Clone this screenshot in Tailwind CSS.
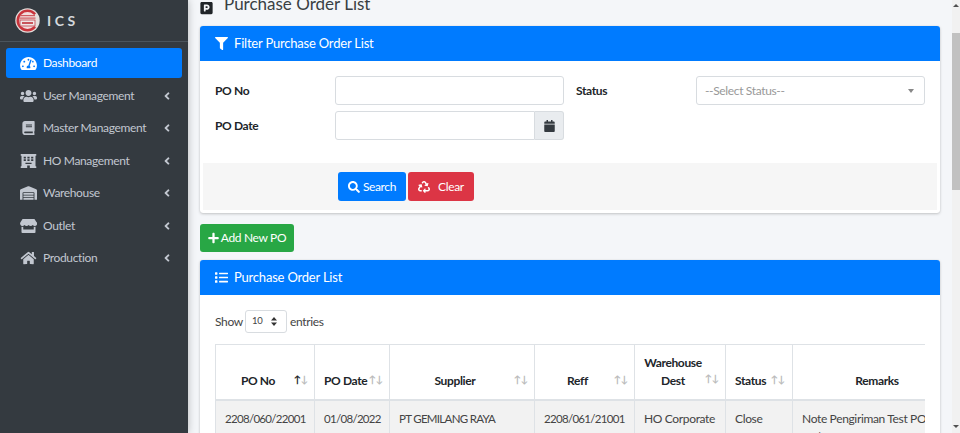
<!doctype html>
<html lang="en">
<head>
    <meta charset="UTF-8" />
    <meta name="viewport" content="width=device-width, initial-scale=1.0" />
    <script src="https://cdn.jsdelivr.net/npm/@tailwindcss/browser@4"></script>
    <title>Purchase Order List</title>
</head>
<body class="h-[433px] overflow-hidden bg-[#f4f6f9] font-['Lato',sans-serif] text-[12px] tracking-[-0.35px] text-[#212529]">
<div class="flex h-[433px]">

    <!-- Sidebar -->
    <aside class="w-[188px] shrink-0 bg-[#343a40] text-[#c2c7d0] shadow-[0_0_8px_rgba(0,0,0,0.25)]">
        <div class="flex h-[42px] items-center gap-[7px] border-b border-[#4b545c] pl-[15px]">
            <svg class="h-[25px] w-[25px]" viewBox="0 0 25 25">
                <circle cx="12.5" cy="12.5" r="12.2" fill="#e4dedc"/>
                <path d="M12.5 1.5A11 11 0 0 0 12.5 23.500A11 11 0 0 0 21 19.500L12.5 12.500L21 5.500A11 11 0 0 0 12.500 1.500Z" fill="#c9343c"/>
                <circle cx="12.5" cy="12.5" r="8.5" fill="#f2dcdc"/>
                <rect x="5" y="7" width="15" height="1.200" fill="#cf5a60"/>
                <rect x="4.500" y="9.500" width="16" height="1.200" fill="#cf5a60"/>
                <rect x="5" y="12" width="15" height="6" fill="#efe6e6" stroke="#c04049" stroke-width="0.800"/>
                <rect x="7" y="14" width="11" height="2" fill="#c9545b"/>
            </svg>
            <span class="text-[14px] font-bold tracking-[3.5px] text-[#d5d8dc]">ICS</span>
        </div>
        <nav class="px-[6px] pt-[6px]">
            <a class="flex h-[30px] items-center rounded-[3px] bg-[#007bff] pl-[14px] text-white">
                <svg class="mr-[6px] h-[15px] w-[17px] fill-current" viewBox="0 0 576 512"><path d="M288 32C128.94 32 0 160.94 0 320c0 52.8 14.25 102.26 39.06 144.8 5.61 9.62 16.3 15.2 27.44 15.2h443c11.14 0 21.83-5.58 27.44-15.2C561.75 422.26 576 372.8 576 320c0-159.06-128.94-288-288-288zm0 64c14.71 0 26.58 10.13 30.32 23.65-1.11 2.26-2.64 4.23-3.45 6.67l-9.22 27.67c-5.13 3.49-10.97 6.01-17.64 6.01-17.67 0-32-14.33-32-32S270.33 96 288 96zM96 384c-17.67 0-32-14.33-32-32s14.33-32 32-32 32 14.33 32 32-14.33 32-32 32zm48-160c-17.67 0-32-14.33-32-32s14.33-32 32-32 32 14.33 32 32-14.33 32-32 32zm246.77-72.41l-61.33 184C343.13 347.33 352 364.54 352 384c0 11.72-3.38 22.55-8.88 32H232.88c-5.5-9.45-8.88-20.28-8.88-32 0-33.94 26.5-61.43 59.9-63.59l61.34-184.01c4.17-12.56 17.73-19.45 30.36-15.17 12.57 4.19 19.35 17.77 15.17 30.36zm14.66 57.2l15.52-46.55c3.47-1.29 7.13-2.23 11.05-2.23 17.67 0 32 14.33 32 32s-14.33 32-32 32c-11.38-.01-20.89-6.28-26.57-15.22zM480 384c-17.67 0-32-14.33-32-32s14.33-32 32-32 32 14.33 32 32-14.33 32-32 32z"/></svg>
                Dashboard
            </a>
            <a class="mt-[2.5px] flex h-[30px] items-center pl-[14px]">
                <svg class="mr-[6px] h-[14px] w-[17px] fill-current" viewBox="0 0 640 512"><path d="M96 224c35.3 0 64-28.7 64-64s-28.7-64-64-64-64 28.7-64 64 28.7 64 64 64zm448 0c35.3 0 64-28.7 64-64s-28.7-64-64-64-64 28.7-64 64 28.7 64 64 64zm32 32h-64c-17.6 0-33.5 7.1-45.1 18.6 40.3 22.1 68.9 62 75.1 109.4h66c17.7 0 32-14.3 32-32v-32c0-35.3-28.7-64-64-64zm-256 0c61.9 0 112-50.1 112-112S381.9 32 320 32 208 82.1 208 144s50.1 112 112 112zm76.8 32h-8.3c-20.8 10-43.9 16-68.5 16s-47.6-6-68.5-16h-8.3C179.6 288 128 339.6 128 403.2V432c0 26.5 21.5 48 48 48h288c26.5 0 48-21.5 48-48v-28.8c0-63.6-51.6-115.2-115.2-115.2zm-223.7-13.4C161.5 263.1 145.6 256 128 256H64c-35.3 0-64 28.7-64 64v32c0 17.7 14.3 32 32 32h65.9c6.3-47.4 34.9-87.3 75.2-109.4z"/></svg>
                <span class="flex-1">User Management</span>
                <svg class="mr-[12px] h-[12px] w-[6px] fill-current" viewBox="0 0 256 512"><path d="M31.7 239l136-136c9.4-9.4 24.6-9.4 33.9 0l22.6 22.6c9.4 9.4 9.4 24.6 0 33.9L127.9 256l96.4 96.4c9.4 9.4 9.4 24.6 0 33.9L201.7 409c-9.4 9.4-24.6 9.4-33.9 0l-136-136c-9.5-9.4-9.5-24.6-.1-34z"/></svg>
            </a>
            <a class="mt-[2.5px] flex h-[30px] items-center pl-[14px]">
                <svg class="mr-[6px] h-[14px] w-[17px] fill-current" viewBox="0 0 448 512"><path d="M448 360V24c0-13.3-10.7-24-24-24H96C43 0 0 43 0 96v320c0 53 43 96 96 96h328c13.3 0 24-10.7 24-24v-16c0-7.5-3.5-14.3-8.9-18.7-4.2-15.4-4.2-59.3 0-74.7 5.4-4.3 8.9-11.1 8.9-18.6zM128 134c0-3.3 2.7-6 6-6h212c3.3 0 6 2.7 6 6v20c0 3.3-2.7 6-6 6H134c-3.3 0-6-2.7-6-6v-20zm0 64c0-3.3 2.7-6 6-6h212c3.3 0 6 2.7 6 6v20c0 3.3-2.7 6-6 6H134c-3.3 0-6-2.7-6-6v-20zm253.4 250H96c-17.7 0-32-14.3-32-32 0-17.6 14.4-32 32-32h285.4c-1.9 17.1-1.9 46.9 0 64z"/></svg>
                <span class="flex-1">Master Management</span>
                <svg class="mr-[12px] h-[12px] w-[6px] fill-current" viewBox="0 0 256 512"><path d="M31.7 239l136-136c9.4-9.4 24.6-9.4 33.9 0l22.6 22.6c9.4 9.4 9.4 24.6 0 33.9L127.9 256l96.4 96.4c9.4 9.4 9.4 24.6 0 33.9L201.7 409c-9.4 9.4-24.6 9.4-33.9 0l-136-136c-9.5-9.4-9.5-24.6-.1-34z"/></svg>
            </a>
            <a class="mt-[2.5px] flex h-[30px] items-center pl-[14px]">
                <svg class="mr-[6px] h-[14px] w-[17px] fill-current" viewBox="0 0 576 512"><path fill-rule="evenodd" d="M16 0H560a16 16 0 0 1 16 16V48a16 16 0 0 1-16 16H544V448h16a16 16 0 0 1 16 16v32a16 16 0 0 1-16 16H336V416H240V512H16a16 16 0 0 1-16-16V464a16 16 0 0 1 16-16H32V64H16A16 16 0 0 1 0 48V16A16 16 0 0 1 16 0ZM112 96V160H192V96ZM248 96V160H328V96ZM384 96V160H464V96ZM112 192V256H192V192ZM248 192V256H328V192ZM384 192V256H464V192ZM176 320V368H400V320Z"/></svg>
                <span class="flex-1">HO Management</span>
                <svg class="mr-[12px] h-[12px] w-[6px] fill-current" viewBox="0 0 256 512"><path d="M31.7 239l136-136c9.4-9.4 24.6-9.4 33.9 0l22.6 22.6c9.4 9.4 9.4 24.6 0 33.9L127.9 256l96.4 96.4c9.4 9.4 9.4 24.6 0 33.9L201.7 409c-9.4 9.4-24.6 9.4-33.9 0l-136-136c-9.5-9.4-9.5-24.6-.1-34z"/></svg>
            </a>
            <a class="mt-[2.5px] flex h-[30px] items-center pl-[14px]">
                <svg class="mr-[6px] h-[14px] w-[17px] fill-current" viewBox="0 0 640 512"><path d="M504 352H136.4c-4.4 0-8 3.6-8 8l-.1 48c0 4.4 3.6 8 8 8H504c4.4 0 8-3.6 8-8v-48c0-4.4-3.6-8-8-8zm0 96H136.1c-4.4 0-8 3.6-8 8l-.1 48c0 4.4 3.6 8 8 8h368c4.4 0 8-3.6 8-8v-48c0-4.4-3.6-8-8-8zm0-192H136.6c-4.4 0-8 3.6-8 8l-.1 48c0 4.4 3.6 8 8 8H504c4.4 0 8-3.6 8-8v-48c0-4.4-3.6-8-8-8zm106.5-139L338.4 3.7a48.15 48.15 0 0 0-36.9 0L29.5 117C11.7 124.5 0 141.9 0 161.3V504c0 4.4 3.6 8 8 8h80c4.4 0 8-3.6 8-8V256c0-17.6 14.6-32 32.6-32h382.8c18 0 32.6 14.4 32.6 32v248c0 4.4 3.6 8 8 8h80c4.4 0 8-3.6 8-8V161.3c0-19.4-11.7-36.8-29.5-44.3z"/></svg>
                <span class="flex-1">Warehouse</span>
                <svg class="mr-[12px] h-[12px] w-[6px] fill-current" viewBox="0 0 256 512"><path d="M31.7 239l136-136c9.4-9.4 24.6-9.4 33.9 0l22.6 22.6c9.4 9.4 9.4 24.6 0 33.9L127.9 256l96.4 96.4c9.4 9.4 9.4 24.6 0 33.9L201.7 409c-9.4 9.4-24.6 9.4-33.9 0l-136-136c-9.5-9.4-9.5-24.6-.1-34z"/></svg>
            </a>
            <a class="mt-[2.5px] flex h-[30px] items-center pl-[14px]">
                <svg class="mr-[6px] h-[14px] w-[17px] fill-current" viewBox="0 0 616 512"><path d="M602 118.6L537.1 15C531.3 5.7 521 0 510 0H106C95 0 84.7 5.7 78.9 15L14 118.6c-33.9 54.1-3.9 129.3 59.4 137.9 4.6.6 9.2 1 13.7 1 30.1 0 56.7-13.2 75.1-33.6 18.4 20.4 45.1 33.6 75.1 33.6 30.1 0 56.8-13.2 75.1-33.6 18.4 20.4 45.1 33.6 75.1 33.6 30.1 0 56.7-13.2 75.1-33.6 18.4 20.4 45 33.6 75.1 33.6 4.6 0 9.1-.4 13.7-1 63.5-8.6 93.6-83.9 59.6-137.9zM529.5 288c-10 0-19.9-1.5-29.5-3.8V384H116v-99.8c-9.6 2.2-19.5 3.8-29.5 3.8-6 0-12.1-.4-18-1.2-5.6-.8-11.1-2.1-16.4-3.6V480c0 17.7 14.3 32 32 32h448c17.7 0 32-14.3 32-32V283.2c-5.4 1.6-10.8 2.9-16.4 3.6-6.1.8-12.1 1.2-18.2 1.2z"/></svg>
                <span class="flex-1">Outlet</span>
                <svg class="mr-[12px] h-[12px] w-[6px] fill-current" viewBox="0 0 256 512"><path d="M31.7 239l136-136c9.4-9.4 24.6-9.4 33.9 0l22.6 22.6c9.4 9.4 9.4 24.6 0 33.9L127.9 256l96.4 96.4c9.4 9.4 9.4 24.6 0 33.9L201.7 409c-9.4 9.4-24.6 9.4-33.9 0l-136-136c-9.5-9.4-9.5-24.6-.1-34z"/></svg>
            </a>
            <a class="mt-[2.5px] flex h-[30px] items-center pl-[14px]">
                <svg class="mr-[6px] h-[14px] w-[17px] fill-current" viewBox="0 0 576 512"><path d="M280.37 148.26L96 300.11V464a16 16 0 0 0 16 16l112.06-.29a16 16 0 0 0 15.92-16V368a16 16 0 0 1 16-16h64a16 16 0 0 1 16 16v95.64a16 16 0 0 0 16 16.05L464 480a16 16 0 0 0 16-16V300L295.67 148.26a12.19 12.19 0 0 0-15.3 0zM571.6 251.47L488 182.56V44.05a12 12 0 0 0-12-12h-56a12 12 0 0 0-12 12v72.61L318.47 43a48 48 0 0 0-61 0L4.34 251.47a12 12 0 0 0-1.6 16.9l25.5 31A12 12 0 0 0 45.15 301l235.22-193.74a12.19 12.19 0 0 1 15.3 0L530.9 301a12 12 0 0 0 16.9-1.6l25.5-31a12 12 0 0 0-1.7-16.93z"/></svg>
                <span class="flex-1">Production</span>
                <svg class="mr-[12px] h-[12px] w-[6px] fill-current" viewBox="0 0 256 512"><path d="M31.7 239l136-136c9.4-9.4 24.6-9.4 33.9 0l22.6 22.6c9.4 9.4 9.4 24.6 0 33.9L127.9 256l96.4 96.4c9.4 9.4 9.4 24.6 0 33.9L201.7 409c-9.4 9.4-24.6 9.4-33.9 0l-136-136c-9.5-9.4-9.5-24.6-.1-34z"/></svg>
            </a>
        </nav>
    </aside>

    <!-- Content -->
    <main class="min-w-0 flex-1 overflow-hidden pr-[12px] pl-[12px]">
        <div class="-mt-[19px] flex h-[45px] items-center gap-[11px]">
            <svg class="mt-[8px] h-[14px] w-[13px] fill-[#212529]" viewBox="0 0 448 512"><path d="M400 32H48C21.5 32 0 53.5 0 80v352c0 26.5 21.5 48 48 48h352c26.5 0 48-21.5 48-48V80c0-26.5-21.5-48-48-48zM240 320h-48v48c0 8.8-7.2 16-16 16h-32c-8.8 0-16-7.2-16-16V144c0-8.8 7.2-16 16-16h96c52.9 0 96 43.1 96 96s-43.1 96-96 96zm0-128h-48v64h48c17.6 0 32-14.4 32-32s-14.4-32-32-32z"/></svg>
            <h1 class="text-[17px] font-normal tracking-normal text-[#3a3f44]">Purchase Order List</h1>
        </div>

        <!-- Filter card -->
        <section class="rounded-[3px] bg-white shadow-[0_0_1px_rgba(0,0,0,0.13),0_1px_3px_rgba(0,0,0,0.2)]">
            <div class="flex h-[35px] items-center gap-[6px] rounded-t-[3px] bg-[#007bff] pl-[15px] text-[13px] tracking-[-0.2px] text-white">
                <svg class="h-[13px] w-[13px] fill-current" viewBox="0 0 512 512"><path d="M487.976 0H24.028C2.71 0-8.047 25.866 7.058 40.971L192 225.941V432c0 7.831 3.821 15.17 10.237 19.662l80 55.98C298.02 518.69 320 507.493 320 487.98V225.941l184.947-184.97C520.021 25.896 509.338 0 487.976 0z"/></svg>
                Filter Purchase Order List
            </div>
            <div class="px-[15px] pt-[15px]">
                <div class="flex items-center">
                    <label class="w-[120px] font-bold">PO No</label>
                    <input class="h-[29px] w-[229px] rounded-[3px] border border-[#d8dce0] bg-white" />
                    <label class="ml-[12px] w-[120px] font-bold">Status</label>
                    <div class="flex h-[29px] w-[229px] items-center justify-between rounded-[3px] border border-[#d8dce0] pr-[10px] pl-[8px] text-[#999]">
                        --Select Status--
                        <span class="h-0 w-0 border-x-[3px] border-t-[4px] border-x-transparent border-t-[#888]"></span>
                    </div>
                </div>
                <div class="mt-[6px] flex items-center">
                    <label class="w-[120px] font-bold">PO Date</label>
                    <div class="flex h-[29px] w-[229px]">
                        <input class="h-full min-w-0 flex-1 rounded-l-[3px] border border-[#d8dce0] bg-white" />
                        <span class="flex w-[29px] items-center justify-center rounded-r-[3px] border border-l-0 border-[#d8dce0] bg-[#e9ecef]">
                            <svg class="h-[12px] w-[11px] fill-[#343a40]" viewBox="0 0 448 512"><path d="M12 192h424c6.6 0 12 5.4 12 12v260c0 26.5-21.5 48-48 48H48c-26.5 0-48-21.5-48-48V204c0-6.6 5.4-12 12-12zm436-44v-36c0-26.5-21.5-48-48-48h-48V12c0-6.6-5.4-12-12-12h-40c-6.6 0-12 5.4-12 12v52H160V12c0-6.6-5.4-12-12-12h-40c-6.6 0-12 5.4-12 12v52H48C21.5 64 0 85.5 0 112v36c0 6.6 5.4 12 12 12h424c6.6 0 12-5.4 12-12z"/></svg>
                        </span>
                    </div>
                </div>
            </div>
            <div class="mx-[3px] mt-[23px] flex h-[47px] items-center gap-[2px] bg-[#f6f6f6] pl-[135px]">
                <button class="flex h-[29px] w-[68px] items-center justify-center gap-[3px] rounded-[3px] bg-[#007bff] text-white">
                    <svg class="h-[12px] w-[12px] fill-current" viewBox="0 0 512 512"><path d="M505 442.7L405.3 343c-4.5-4.5-10.6-7-17-7H372c27.6-35.3 44-79.7 44-128C416 93.1 322.9 0 208 0S0 93.1 0 208s93.1 208 208 208c48.3 0 92.7-16.4 128-44v16.3c0 6.4 2.5 12.5 7 17l99.7 99.7c9.4 9.4 24.6 9.4 33.9 0l28.3-28.3c9.4-9.4 9.4-24.6.1-34zM208 336c-70.7 0-128-57.2-128-128 0-70.7 57.2-128 128-128 70.7 0 128 57.2 128 128 0 70.7-57.2 128-128 128z"/></svg>
                    Search
                </button>
                <button class="flex h-[29px] w-[66px] items-center justify-center gap-[8px] rounded-[3px] bg-[#dc3545] text-white">
                    <svg class="h-[12px] w-[12px] fill-current" viewBox="0 0 512 512"><path d="M184.561 261.903c3.232 13.997-12.123 24.635-24.068 17.168l-40.736-25.455-50.867 81.402C55.606 356.273 70.96 384 96.012 384H148c6.627 0 12 5.373 12 12v40c0 6.627-5.373 12-12 12H96.115c-75.334 0-121.302-83.048-81.408-146.88l50.822-81.388-40.725-25.448c-12.081-7.547-8.966-25.961 4.879-29.158l110.237-25.45c8.611-1.988 17.201 3.381 19.189 11.99l25.452 110.237zm98.561-182.915l41.289 66.076-40.74 25.457c-12.051 7.528-9 25.953 4.879 29.158l110.237 25.45c8.672 1.999 17.215-3.438 19.189-11.99l25.45-110.237c3.197-13.844-11.99-24.719-24.068-17.168l-40.687 25.424-41.263-66.082c-37.521-60.033-125.209-60.171-162.816 0l-17.963 28.766c-3.51 5.62-1.8 13.021 3.82 16.533l33.919 21.195c5.62 3.512 13.024 1.803 16.536-3.817l17.961-28.743c12.712-20.341 41.973-19.676 54.257-.022zM497.288 301.12l-27.515-44.065c-3.511-5.623-10.916-7.334-16.538-3.821l-33.861 21.159c-5.62 3.512-7.33 10.915-3.818 16.536l27.564 44.112c13.289 21.257-2.046 48.96-27.136 48.96H320V336.02c0-14.213-17.242-21.383-27.313-11.313l-80 79.981c-6.249 6.248-6.249 16.379 0 22.627l80 79.989C302.689 517.308 320 510.3 320 495.989V448h95.88c75.274 0 121.335-82.997 81.408-146.88z"/></svg>
                    Clear
                </button>
            </div>
            <div class="h-[3px]"></div>
        </section>

        <button class="mt-[11px] flex h-[28px] w-[94px] items-center justify-center gap-[2px] rounded-[3px] bg-[#28a745] text-white">
            <svg class="h-[12px] w-[11px] fill-current" viewBox="0 0 448 512"><path d="M416 208H272V64c0-17.67-14.33-32-32-32h-32c-17.67 0-32 14.33-32 32v144H32c-17.67 0-32 14.33-32 32v32c0 17.67 14.33 32 32 32h144v144c0 17.67 14.33 32 32 32h32c17.67 0 32-14.33 32-32V304h144c17.67 0 32-14.33 32-32v-32c0-17.67-14.33-32-32-32z"/></svg>
            Add New PO
        </button>

        <!-- List card -->
        <section class="mt-[8px] rounded-t-[3px] bg-white shadow-[0_0_1px_rgba(0,0,0,0.13),0_1px_3px_rgba(0,0,0,0.2)]">
            <div class="flex h-[35px] items-center gap-[6px] rounded-t-[3px] bg-[#007bff] pl-[15px] text-[13px] tracking-[-0.2px] text-white">
                <svg class="h-[13px] w-[13px] fill-current" viewBox="0 0 512 512"><path d="M80 368H16a16 16 0 0 0-16 16v64a16 16 0 0 0 16 16h64a16 16 0 0 0 16-16v-64a16 16 0 0 0-16-16zm0-320H16A16 16 0 0 0 0 64v64a16 16 0 0 0 16 16h64a16 16 0 0 0 16-16V64a16 16 0 0 0-16-16zm0 160H16a16 16 0 0 0-16 16v64a16 16 0 0 0 16 16h64a16 16 0 0 0 16-16v-64a16 16 0 0 0-16-16zm416 176H176a16 16 0 0 0-16 16v32a16 16 0 0 0 16 16h320a16 16 0 0 0 16-16v-32a16 16 0 0 0-16-16zm0-320H176a16 16 0 0 0-16 16v32a16 16 0 0 0 16 16h320a16 16 0 0 0 16-16V80a16 16 0 0 0-16-16zm0 160H176a16 16 0 0 0-16 16v32a16 16 0 0 0 16 16h320a16 16 0 0 0 16-16v-32a16 16 0 0 0-16-16z"/></svg>
                Purchase Order List
            </div>
            <div class="px-[15px] pt-[15px]">
                <div class="flex items-center text-[#444]">
                    <span class="w-[30px]">Show</span>
                    <span class="flex h-[23px] w-[42px] items-center justify-between rounded-[3px] border border-[#d8dce0] pr-[9px] pl-[6px] text-[9.5px]">10
                        <svg class="h-[9px] w-[6px] fill-[#333]" viewBox="0 0 6 9"><path d="M3 0L6 3.500H0ZM0 5.500H6L3 9Z"/></svg>
                    </span>
                    <span class="ml-[3px]">entries</span>
                </div>
                <div class="mt-[11px] overflow-hidden">
                    <table class="w-[760px] table-fixed border-collapse">
                        <colgroup>
                            <col class="w-[99px]" /><col class="w-[75px]" /><col class="w-[145px]" /><col class="w-[100px]" /><col class="w-[91px]" /><col class="w-[67px]" /><col class="w-[183px]" />
                        </colgroup>
                        <thead>
                            <tr class="h-[55px] border-b-2 border-[#dee2e6]">
                                <th class="relative border border-[#dee2e6] pr-[23px] pb-[9px] pl-[9px] align-bottom font-bold">PO No<span class="absolute right-[6px] bottom-[12px] text-[10px]"><span class="text-[#212529]">&#8593;</span><span class="text-[#bbb]">&#8595;</span></span></th>
                                <th class="relative border border-[#dee2e6] pb-[9px] pl-[9px] text-left align-bottom font-bold">PO Date<span class="absolute right-[6px] bottom-[12px] text-[10px] text-[#bbb]">&#8593;&#8595;</span></th>
                                <th class="relative border border-[#dee2e6] pr-[23px] pb-[9px] pl-[9px] align-bottom font-bold">Supplier<span class="absolute right-[6px] bottom-[12px] text-[10px] text-[#bbb]">&#8593;&#8595;</span></th>
                                <th class="relative border border-[#dee2e6] pr-[23px] pb-[9px] pl-[9px] align-bottom font-bold">Reff<span class="absolute right-[6px] bottom-[12px] text-[10px] text-[#bbb]">&#8593;&#8595;</span></th>
                                <th class="relative border border-[#dee2e6] pr-[23px] pb-[9px] pl-[9px] align-bottom leading-[18px] font-bold">Warehouse<br />Dest<span class="absolute right-[6px] bottom-[12px] text-[10px] text-[#bbb]">&#8593;&#8595;</span></th>
                                <th class="relative border border-[#dee2e6] pb-[9px] pl-[9px] text-left align-bottom font-bold">Status<span class="absolute right-[7px] bottom-[12px] text-[10px] text-[#bbb]">&#8593;&#8595;</span></th>
                                <th class="border border-[#dee2e6] pr-[23px] pb-[9px] pl-[9px] align-bottom font-bold">Remarks</th>
                            </tr>
                        </thead>
                        <tbody class="text-[#444]">
                            <tr class="bg-[#f2f2f2]">
                                <td class="border border-[#dee2e6] px-[9px] pt-[9px] align-top text-[11.5px] leading-[18px] tracking-[-0.7px] whitespace-nowrap">2208/060/22001</td>
                                <td class="border border-[#dee2e6] px-[9px] pt-[9px] align-top text-[11.5px] leading-[18px] tracking-[-0.7px] whitespace-nowrap">01/08/2022</td>
                                <td class="border border-[#dee2e6] px-[9px] pt-[9px] align-top text-[11.5px] leading-[18px] tracking-[-0.7px] whitespace-nowrap">PT GEMILANG RAYA</td>
                                <td class="border border-[#dee2e6] px-[9px] pt-[9px] align-top text-[11.5px] leading-[18px] tracking-[-0.7px] whitespace-nowrap">2208/061/21001</td>
                                <td class="border border-[#dee2e6] px-[9px] pt-[9px] align-top leading-[18px] whitespace-nowrap">HO Corporate</td>
                                <td class="border border-[#dee2e6] px-[9px] pt-[9px] align-top leading-[18px]">Close</td>
                                <td class="border border-[#dee2e6] px-[9px] pt-[9px] align-top leading-[18px] whitespace-nowrap">Note Pengiriman Test PO<br />11/2022</td>
                            </tr>
                        </tbody>
                    </table>
                </div>
            </div>
        </section>
    </main>

    <!-- Window scrollbar -->
    <div class="flex w-[8px] shrink-0 flex-col bg-[#f1f1f1]">
        <div class="flex h-[33px] items-start justify-center pt-[4px]"><span class="h-0 w-0 border-x-[3px] border-b-[3px] border-x-transparent border-b-[#505050]"></span></div>
        <div class="h-[157px] bg-[#c1c1c1]"></div>
        <div class="mt-auto flex h-[10px] justify-center pt-[2px]"><span class="h-0 w-0 border-x-[3px] border-t-[3px] border-x-transparent border-t-[#505050]"></span></div>
    </div>
</div>
</body>
</html>
